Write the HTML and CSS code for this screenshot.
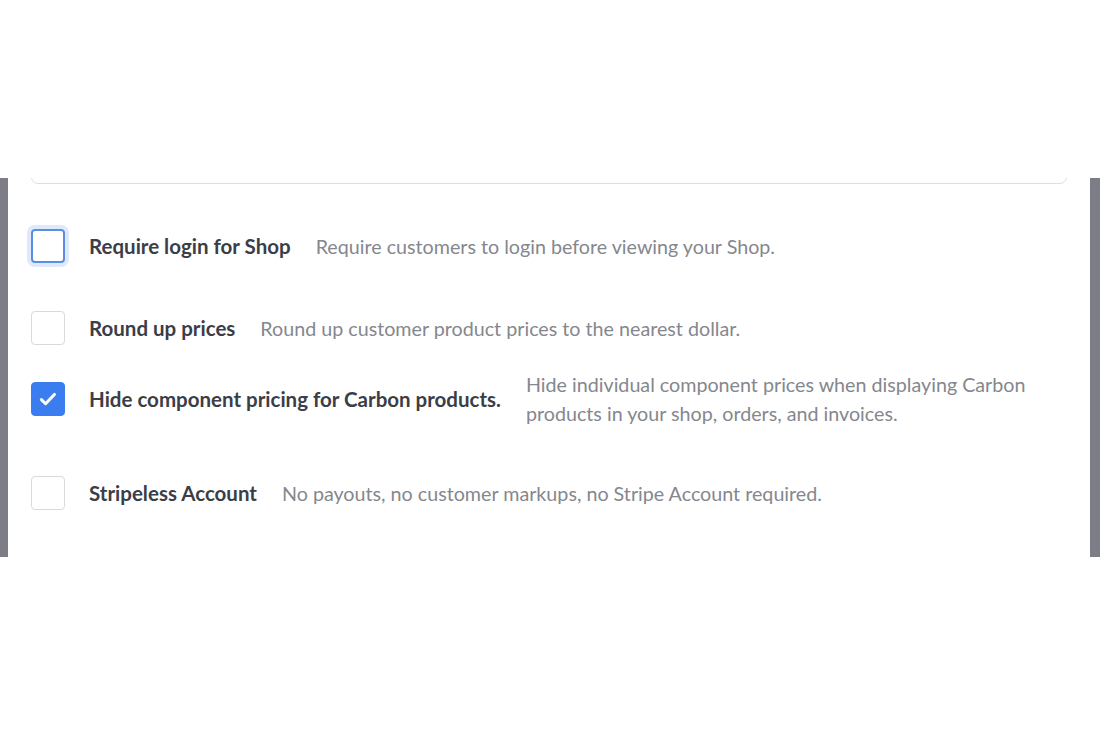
FILE: index.html
```html
<!DOCTYPE html>
<html lang="en">
<head>
  <meta charset="utf-8">
  <title>Shop settings</title>
  <link rel="stylesheet" href="styles.css">
</head>
<body>
  <div class="frame">
    <div class="panel">
      <div class="field"></div>
      <div class="options">
        <label class="option">
          <span class="box focus"></span>
          <span class="label">Require login for Shop</span>
          <span class="desc">Require customers to login before viewing your Shop.</span>
        </label>
        <label class="option">
          <span class="box"></span>
          <span class="label">Round up prices</span>
          <span class="desc">Round up customer product prices to the nearest dollar.</span>
        </label>
        <label class="option tight">
          <span class="box checked">
            <svg width="22" height="22" viewBox="0 0 20 20"><path d="M4 10.5l3.8 3.8 8-8.4" fill="none" stroke="#fff" stroke-width="2.8" stroke-linecap="round" stroke-linejoin="round"/></svg>
          </span>
          <span class="label">Hide component pricing for Carbon products.</span>
          <span class="desc">Hide individual component prices when displaying Carbon products in your shop, orders, and invoices.</span>
        </label>
        <label class="option">
          <span class="box"></span>
          <span class="label">Stripeless Account</span>
          <span class="desc">No payouts, no customer markups, no Stripe Account required.</span>
        </label>
      </div>
    </div>
  </div>
</body>
</html>
```

FILE: styles.css
```css
body {
  margin: 0;
  background: #ffffff;
  font-family: "Lato", "Noto Sans", sans-serif;
}

.frame {
  margin-top: 178px;
  height: 379px;
  background: #7c7d86;
  padding: 0 10px 0 8px;
}

.panel {
  height: 100%;
  background: #ffffff;
  overflow: hidden;
  padding: 0 23px;
}

.field {
  height: 40px;
  margin-top: -36px;
  border: 1px solid #dedede;
  border-radius: 7px;
}

.options {
  padding-top: 45px;
}

.option {
  display: flex;
  align-items: center;
  min-height: 34px;
}

.option + .option {
  margin-top: 48px;
}

.option.tight {
  margin-top: 25px;
}

.box {
  flex: none;
  box-sizing: border-box;
  width: 34px;
  height: 34px;
  border: 1.5px solid #dadada;
  border-radius: 4px;
  margin-right: 24px;
  display: flex;
  align-items: center;
  justify-content: center;
}

.box.focus {
  border: 2px solid #5b8ee3;
  box-shadow: 0 0 0 4px #dfe9fb;
}

.box.checked {
  background: #3a7df0;
  border-color: #3a7df0;
}

.label {
  flex: none;
  font-size: 20.5px;
  line-height: 29px;
  font-weight: 700;
  color: #3b3e46;
  margin-right: 25px;
}

.desc {
  font-size: 19.7px;
  color: #85878e;
  line-height: 29px;
  max-width: 542px;
}
```
